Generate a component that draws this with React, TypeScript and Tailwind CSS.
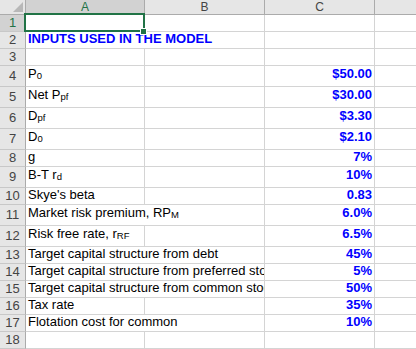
import React from "react";

type Row = {
  h: number;
  a?: React.ReactNode;
  c?: string;
  span?: boolean;
  sel?: boolean;
};

const S = ({ children }: { children: React.ReactNode }) => (
  <sub className="text-[9.5px] bottom-[-1px]">{children}</sub>
);

const rows: Row[] = [
  { h: 17, sel: true },
  {
    h: 17,
    span: true,
    a: <span className="font-bold text-[#0000ff]">INPUTS USED IN THE MODEL</span>,
  },
  { h: 17 },
  { h: 21, a: <>P<S>0</S></>, c: "$50.00" },
  { h: 21, a: <>Net P<S>pf</S></>, c: "$30.00" },
  { h: 21, a: <>D<S>pf</S></>, c: "$3.30" },
  { h: 21, a: <>D<S>0</S></>, c: "$2.10" },
  { h: 17, a: "g", c: "7%" },
  { h: 21, a: <>B-T r<S>d</S></>, c: "10%" },
  { h: 17, a: "Skye's beta", c: "0.83" },
  { h: 21, span: true, a: <>Market risk premium, RP<S>M</S></>, c: "6.0%" },
  { h: 21, a: <>Risk free rate, r<S>RF</S></>, c: "6.5%" },
  { h: 17, span: true, a: "Target capital structure from debt", c: "45%" },
  { h: 17, span: true, a: "Target capital structure from preferred stock", c: "5%" },
  { h: 17, span: true, a: "Target capital structure from common stock", c: "50%" },
  { h: 17, a: "Tax rate", c: "35%" },
  { h: 17, span: true, a: "Flotation cost for common", c: "10%" },
  { h: 17 },
];

export default function App() {
  return (
    <div className="relative w-[416px] h-[349px] overflow-hidden bg-white font-['Liberation_Sans',Arial,sans-serif] text-[13px] text-black">
      {/* column headers */}
      <div className="flex h-[15px] text-[12px] leading-[14px] text-[#444]">
        <div className="w-[26px] h-full shrink-0 border-r border-b border-[#ababab] bg-[#e6e6e6] flex items-end justify-end pr-[2px] pb-[2px]">
          <svg width="10" height="10" viewBox="0 0 10 10">
            <polygon points="10,0 10,10 0,10" fill="#b8b8b8" />
          </svg>
        </div>
        <div className="w-[119px] h-full shrink-0 border-r border-b border-[#ababab] bg-[#d2d2d2] text-[#217346] flex items-center justify-center">
          A
        </div>
        <div className="w-[120px] h-full shrink-0 border-r border-b border-[#ababab] bg-[#e6e6e6] flex items-center justify-center">
          B
        </div>
        <div className="w-[110px] h-full shrink-0 border-r border-b border-[#ababab] bg-[#e6e6e6] flex items-center justify-center">
          C
        </div>
        <div className="flex-1 h-full border-b border-[#ababab] bg-[#e6e6e6]" />
      </div>

      {rows.map((r, i) => {
        const tall = r.h === 21;
        const pb = tall ? "pb-[3px]" : "pb-0";
        return (
          <div key={i} className="flex" style={{ height: r.h }}>
            <div
              className={
                r.sel
                  ? "w-[26px] h-full shrink-0 border-r border-b border-r-[#ababab] border-b-[#c8c8c8] bg-[#d2d2d2] text-[#217346] flex items-center justify-center"
                  : "w-[26px] h-full shrink-0 border-r border-b border-r-[#ababab] border-b-[#c8c8c8] bg-[#e6e6e6] text-[#444] flex items-center justify-center"
              }
            >
              {i + 1}
            </div>
            {r.span ? (
              <div className={`w-[239px] h-full shrink-0 border-r border-b border-[#d4d4d4] flex items-end pl-[2px] overflow-hidden whitespace-nowrap ${pb}`}>
                <span>{r.a}</span>
              </div>
            ) : (
              <>
                <div className={`w-[119px] h-full shrink-0 border-r border-b border-[#d4d4d4] flex items-end pl-[2px] overflow-hidden whitespace-nowrap ${pb}`}>
                  <span>{r.a}</span>
                </div>
                <div className="w-[120px] h-full shrink-0 border-r border-b border-[#d4d4d4]" />
              </>
            )}
            <div className={`w-[110px] h-full shrink-0 border-r border-b border-[#d4d4d4] flex items-end justify-end pr-[2px] font-bold text-[#0000ff] whitespace-nowrap ${pb}`}>
              {r.c}
            </div>
            <div className="flex-1 h-full border-b border-[#d4d4d4]" />
          </div>
        );
      })}

      {/* active cell selection */}
      <div className="absolute left-[24px] top-[13px] w-[121px] h-[19px] border-2 border-[#217346]" />
      <div className="absolute left-[140px] top-[28px] w-[7px] h-[7px] bg-[#217346] border border-white" />
    </div>
  );
}
